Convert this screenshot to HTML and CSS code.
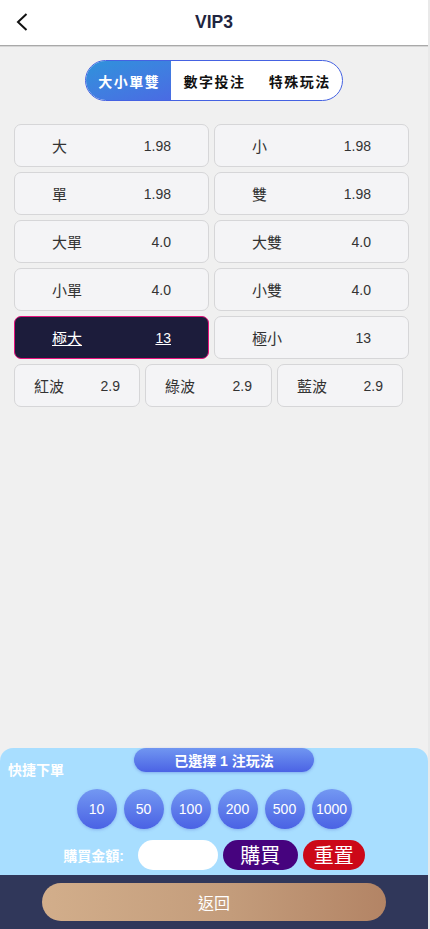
FILE: index.html
```html
<!DOCTYPE html>
<html lang="zh-Hant">
<head>
<meta charset="utf-8">
<meta name="viewport" content="width=430">
<title>VIP3</title>
<link rel="stylesheet" href="styles.css">
</head>
<body>
<div class="app">
  <header class="topbar">
    <span class="back">
      <svg width="12" height="18" viewBox="0 0 12 18"><path d="M10.5 1 L2 9 L10.5 17" fill="none" stroke="#111" stroke-width="2"/></svg>
    </span>
    <h1 class="title">VIP3</h1>
  </header>

  <nav class="tabs">
    <span class="tab active">大小單雙</span>
    <span class="tab">數字投注</span>
    <span class="tab">特殊玩法</span>
  </nav>

  <section class="bets">
    <div class="grid2">
      <div class="cell"><span>大</span><span>1.98</span></div>
      <div class="cell"><span>小</span><span>1.98</span></div>
      <div class="cell"><span>單</span><span>1.98</span></div>
      <div class="cell"><span>雙</span><span>1.98</span></div>
      <div class="cell"><span>大單</span><span>4.0</span></div>
      <div class="cell"><span>大雙</span><span>4.0</span></div>
      <div class="cell"><span>小單</span><span>4.0</span></div>
      <div class="cell"><span>小雙</span><span>4.0</span></div>
      <div class="cell selected"><span>極大</span><span>13</span></div>
      <div class="cell"><span>極小</span><span>13</span></div>
    </div>
    <div class="grid3">
      <div class="cell small"><span>紅波</span><span>2.9</span></div>
      <div class="cell small"><span>綠波</span><span>2.9</span></div>
      <div class="cell small"><span>藍波</span><span>2.9</span></div>
    </div>
  </section>

  <section class="panel">
    <div class="panel-top">
      <span class="quick">快捷下單</span>
      <span class="count">已選擇 1 注玩法</span>
    </div>
    <div class="chips">
      <span class="chip">10</span>
      <span class="chip">50</span>
      <span class="chip">100</span>
      <span class="chip">200</span>
      <span class="chip">500</span>
      <span class="chip">1000</span>
    </div>
    <div class="amount">
      <span class="amount-label">購買金額:</span>
      <span class="amount-input"></span>
      <span class="btn buy">購買</span>
      <span class="btn reset">重置</span>
    </div>
  </section>

  <footer class="footer">
    <span class="return">返回</span>
  </footer>
</div>
</body>
</html>
```

FILE: styles.css
```css
* { box-sizing: border-box; }
html, body { margin: 0; padding: 0; }
body {
  background: #e9e9e9;
  font-family: "Liberation Sans", Arial, "Noto Sans CJK TC", sans-serif;
  color: #333;
}
.app {
  width: 428px;
  min-height: 929px;
  background: #f0f0f0;
  display: flex;
  flex-direction: column;
}
.topbar {
  height: 46px;
  background: #fff;
  border-bottom: 1px solid #a9a9a9;
  box-shadow: 0 1px 0 #d6d6d6;
  display: flex;
  align-items: center;
  justify-content: center;
  position: relative;
}
.back {
  position: absolute;
  left: 16px;
  top: 13px;
  display: flex;
}
.title {
  margin: 0;
  font-size: 17.5px;
  font-weight: bold;
  color: #1f2540;
}
.tabs {
  margin: 14px auto 0;
  width: 258px;
  height: 41px;
  border: 1px solid #4562e2;
  border-radius: 21px;
  background: #fff;
  display: flex;
  overflow: hidden;
}
.tab {
  width: 86px;
  display: flex;
  align-items: center;
  justify-content: center;
  font-size: 14px;
  font-weight: bold;
  letter-spacing: 1.5px;
  color: #111;
  padding-left: 1px;
}
.tab.active {
  color: #fff;
  background: linear-gradient(160deg, #2e93db 0%, #3f7fe0 50%, #4a6be3 100%);
}
.bets {
  margin-top: 23px;
  padding-left: 14px;
}
.grid2 {
  display: grid;
  grid-template-columns: 195px 195px;
  gap: 5px;
}
.grid3 {
  margin-top: 5px;
  display: grid;
  grid-template-columns: 126px 127px 126px;
  gap: 5px;
}
.cell {
  height: 43px;
  background: #f4f4f6;
  border: 1px solid #d6d6d8;
  border-radius: 7px;
  display: flex;
  align-items: center;
  justify-content: space-between;
  padding: 0 37px 0 37px;
  font-size: 14px;
  color: #333;
}
.cell span:first-child { font-size: 15px; font-family: "Noto Sans CJK TC", sans-serif; }
.cell.small { padding: 0 19px 0 19px; }
.cell.selected {
  background: #1c1c3b;
  border-color: #e5127d;
  color: #fff;
}
.cell.selected span { text-decoration: underline; }

.panel {
  margin-top: auto;
  height: 127px;
  background: #a8deff;
  border-radius: 13px 13px 0 0;
  display: flex;
  flex-direction: column;
}
.panel-top {
  display: flex;
  align-items: flex-start;
  height: 30px;
}
.quick {
  margin: 14px 0 0 8px;
  font-size: 14px;
  line-height: 16px;
  font-weight: bold;
  color: #fff;
  width: 56px;
}
.count {
  margin-left: 70px;
  width: 180px;
  height: 24px;
  border-radius: 12px;
  background: linear-gradient(180deg, #7096f1 0%, #4b63e5 100%);
  box-shadow: 0 1px 3px rgba(60, 80, 200, 0.35);
  color: #fff;
  font-size: 14px;
  font-weight: bold;
  display: flex;
  align-items: center;
  justify-content: center;
}
.chips {
  margin-top: 11px;
  display: flex;
  justify-content: center;
  gap: 7px;
}
.chip {
  width: 40px;
  height: 40px;
  border-radius: 50%;
  background: linear-gradient(180deg, #7398f2 0%, #4a62e4 100%);
  box-shadow: 0 1px 3px rgba(60, 80, 200, 0.3);
  color: #fff;
  font-size: 14px;
  display: flex;
  align-items: center;
  justify-content: center;
}
.amount {
  margin-top: 11px;
  display: flex;
  align-items: center;
  justify-content: center;
  height: 30px;
}
.amount-label {
  font-size: 14px;
  font-weight: bold;
  color: #fff;
  margin-right: 14px;
}
.amount-input {
  width: 80px;
  height: 30px;
  border-radius: 15px;
  background: #fff;
  margin-right: 5px;
}
.btn {
  height: 30px;
  border-radius: 15px;
  color: #fff;
  font-size: 20px;
  line-height: 30px;
  text-align: center;
  font-family: "Noto Sans CJK TC", sans-serif;
}
.buy { width: 75px; background: #46037e; margin-right: 5px; }
.reset { width: 62px; background: #cc0818; }

.footer {
  height: 54px;
  background: #30375a;
  display: flex;
  align-items: center;
  justify-content: center;
}
.return {
  width: 344px;
  height: 38px;
  border-radius: 19px;
  background: linear-gradient(90deg, #d2ae8b 0%, #c39c7b 55%, #b38465 100%);
  color: #fff;
  font-size: 16px;
  display: flex;
  align-items: center;
  justify-content: center;
}
```
